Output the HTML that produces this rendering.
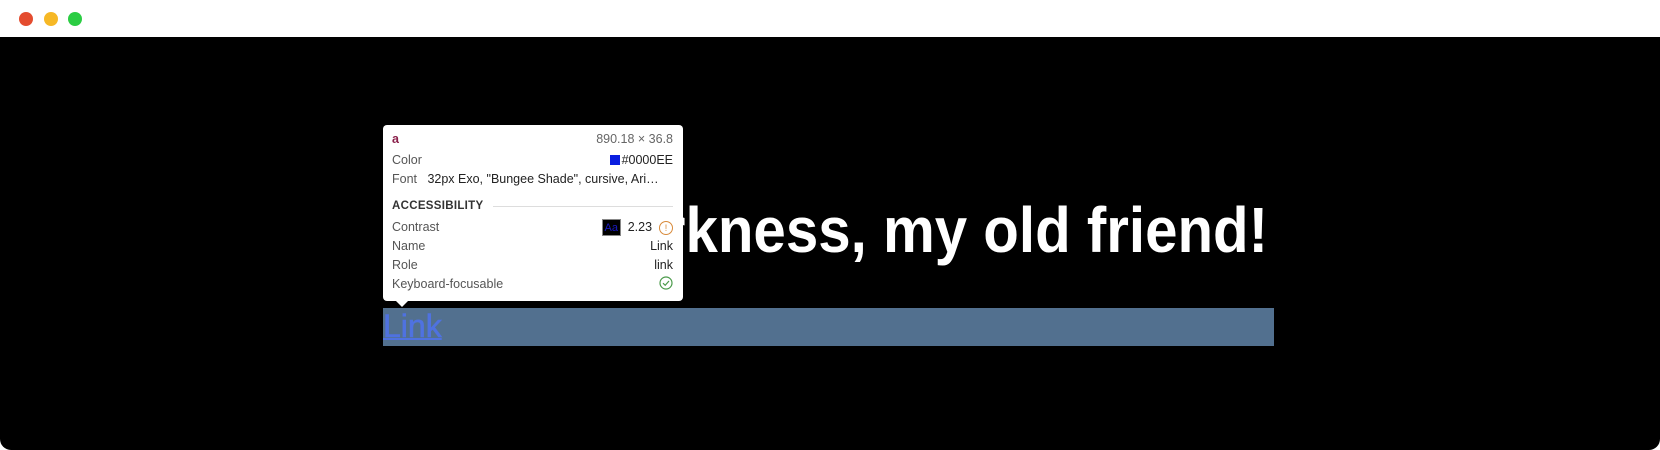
<!DOCTYPE html>
<html><head><meta charset="utf-8"><style>
html,body{margin:0;padding:0;background:#fff;}
body{width:1660px;height:450px;position:relative;overflow:hidden;font-family:"Liberation Sans",sans-serif;}
.bar{position:absolute;left:0;top:0;width:1660px;height:37px;background:#fff;}
.dot{position:absolute;top:12px;width:14px;height:14px;border-radius:50%;}
.main{position:absolute;left:0;top:37px;width:1660px;height:413px;background:#000;border-radius:0 0 11px 11px;}
.h1{position:absolute;right:392px;top:198px;font-weight:bold;font-size:64px;line-height:64px;color:#fff;white-space:nowrap;transform:scaleX(0.91);transform-origin:right top;}
.hl{position:absolute;left:383px;top:308px;width:891px;height:38px;background:#52708f;}
.link{position:absolute;left:383px;top:306px;font-size:32px;line-height:40px;color:#4f72e0;text-decoration:underline;text-decoration-thickness:2px;-webkit-text-stroke:0.6px #4f72e0;}
.tip{position:absolute;left:383px;top:125px;width:300px;height:176px;background:#fff;border-radius:4px;font-size:12.5px;color:#555;}
.arrow{position:absolute;left:395px;top:300px;width:0;height:0;border-left:7px solid transparent;border-right:7px solid transparent;border-top:7px solid #fff;}
.r{position:absolute;left:9px;right:10px;height:18px;line-height:18px;}
.r .v{position:absolute;right:0;top:0;color:#222;}
</style></head><body>
<div class="bar">
<div class="dot" style="left:19px;background:#e44c2f"></div>
<div class="dot" style="left:44px;background:#f6b826"></div>
<div class="dot" style="left:68px;background:#2bcd43"></div>
</div>
<div class="main"></div>
<div class="h1">Hello darkness, my old friend!</div>
<div class="hl"></div>
<div class="link">Link</div>
<div class="tip">
<div class="r" style="top:5px"><b style="color:#8a1f4a">a</b><span class="v" style="color:#666">890.18 × 36.8</span></div>
<div class="r" style="top:26px">Color<span class="v"><span style="display:inline-block;width:10px;height:10px;background:#0a1ee0;vertical-align:-1px;margin-right:2px"></span>#0000EE</span></div>
<div class="r" style="top:45px">Font&nbsp;&nbsp; <span style="color:#222">32px Exo, "Bungee Shade", cursive, Ari…</span></div>
<div class="r" style="top:72px;font-size:11.5px;font-weight:bold;color:#333;letter-spacing:0.3px">ACCESSIBILITY<span style="position:absolute;left:101px;right:0;top:9px;height:1px;background:#ddd"></span></div>
<div class="r" style="top:93px">Contrast<span class="v"><span style="display:inline-block;width:19px;height:17px;background:#000;color:#1a1ac0;font-size:11px;line-height:17px;text-align:center;vertical-align:middle;border:1px solid #888;box-sizing:border-box">Aa</span>&nbsp; 2.23 &nbsp;<span style="display:inline-block;width:12px;height:12px;border:1.3px solid #d88a3a;border-radius:50%;color:#d88a3a;font-size:9px;line-height:12px;text-align:center;vertical-align:middle">!</span></span></div>
<div class="r" style="top:112px">Name<span class="v">Link</span></div>
<div class="r" style="top:131px">Role<span class="v">link</span></div>
<div class="r" style="top:150px">Keyboard-focusable<span class="v"><svg width="14" height="14" viewBox="0 0 14 14" style="vertical-align:-2px"><circle cx="7" cy="7" r="6" fill="none" stroke="#4a9a4a" stroke-width="1.2"/><path d="M4 7.2 L6.2 9.3 L10 5" fill="none" stroke="#4a9a4a" stroke-width="1.2"/></svg></span></div>
</div>
<div class="arrow"></div>
</body></html>
